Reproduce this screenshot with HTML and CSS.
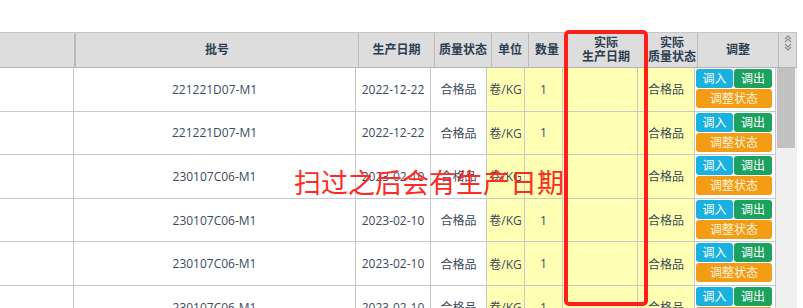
FILE: index.html
```html
<!DOCTYPE html>
<html lang="zh">
<head>
  <meta charset="UTF-8" />
  <title>库存调整</title>
  <link rel="stylesheet" href="styles.css">
</head>
<body>
  <div class="page">
    <div class="grid-head">
      <div class="th"></div>
      <div class="th">批号</div>
      <div class="th">生产日期</div>
      <div class="th">质量状态</div>
      <div class="th">单位</div>
      <div class="th">数量</div>
      <div class="th two-line">实际<br>生产日期</div>
      <div class="th two-line">实际<br>质量状态</div>
      <div class="th">调整</div>
      <div class="th sort-cell">
        <svg width="10" height="16" viewBox="0 0 10 16">
          <path d="M2 4 L5 1 L8 4 M2 7 L5 4 L8 7 M2 9 L5 12 L8 9 M2 12 L5 15 L8 12" fill="none" stroke="#8a8a8a" stroke-width="1.1" />
        </svg>
      </div>
    </div>

    <div class="grid-body">
      <div class="rows" id="rows"></div>
      <div class="scrollbar"><div class="thumb"></div></div>
    </div>

    <div class="mark-box"></div>
    <div class="mark-text">扫过之后会有生产日期</div>
  </div>

  <script>
    const data = [
      ["221221D07-M1", "2022-12-22"],
      ["221221D07-M1", "2022-12-22"],
      ["230107C06-M1", "2023-02-10"],
      ["230107C06-M1", "2023-02-10"],
      ["230107C06-M1", "2023-02-10"],
      ["230107C06-M1", "2023-02-10"]
    ];

    const rows = document.getElementById('rows');
    data.forEach(d => {
      const row = document.createElement('div');
      row.className = 'tr';
      row.innerHTML = `
        <div class="td"></div>
        <div class="td">${d[0]}</div>
        <div class="td">${d[1]}</div>
        <div class="td">合格品</div>
        <div class="td yellow">卷/KG</div>
        <div class="td yellow">1</div>
        <div class="td yellow"></div>
        <div class="td yellow">合格品</div>
        <div class="td ops">
          <span class="btn btn-in">调入</span>
          <span class="btn btn-out">调出</span>
          <span class="btn btn-state">调整状态</span>
        </div>
      `;
      rows.appendChild(row);
    });
  </script>
</body>
</html>
```

FILE: styles.css
```css
html, body {
  margin: 0;
  overflow: hidden;
  background: #fff;
}
body {
  font-family: "Open Sans", "Noto Sans CJK SC", sans-serif;
  font-size: 12px;
  color: #3b4b5b;
}
.page {
  position: relative;
  width: 797px;
  height: 308px;
  padding-top: 32px;
  box-sizing: border-box;
}

.grid-head {
  display: grid;
  grid-template-columns: 76px 283px 76px 57px 37px 37px 81px 51px 81px 18px;
  height: 36px;
  border-top: 1px solid #c4c4c4;
  border-bottom: 1px solid #b4b4b4;
  background-color: #dddddd;
  box-sizing: border-box;
}
.th {
  display: flex;
  align-items: center;
  justify-content: center;
  text-align: center;
  border-right: 1px solid #bcbcbc;
  font-weight: bold;
  color: #2d3e50;
  line-height: 14px;
}
.th:first-child {
  border-right-width: 2px;
}
.sort-cell {
  align-items: flex-start;
  padding-top: 2px;
}

.grid-body {
  display: flex;
}
.rows {
  width: 776px;
}
.tr {
  display: grid;
  grid-template-columns: 74px 282px 75px 56px 38px 38px 75px 57px 81px;
  height: 43.6px;
  border-bottom: 1px solid #c9c9c9;
  box-sizing: border-box;
}
.td {
  display: flex;
  align-items: center;
  justify-content: center;
  border-right: 1px solid #c9c9c9;
  white-space: nowrap;
}
.yellow {
  background-color: #ffffb3;
}

.ops {
  display: grid;
  grid-template-columns: 37px 38px;
  grid-template-rows: 19px 19px;
  gap: 1px;
  align-content: start;
  justify-content: start;
  padding: 1px 0 0 1px;
}
.btn {
  display: flex;
  align-items: center;
  justify-content: center;
  color: #fff;
  border-radius: 3px;
  line-height: 19px;
}
.btn-in {
  background-color: #19b1df;
}
.btn-out {
  background-color: #1ca25f;
}
.btn-state {
  grid-column: 1 / 3;
  background-color: #f39c16;
  color: #fff3df;
}

.scrollbar {
  width: 21px;
  background-color: #f0f0f0;
  padding-left: 1px;
  box-sizing: border-box;
}
.thumb {
  width: 18px;
  height: 80px;
  background-color: #c1c1c1;
}

.mark-box {
  position: absolute;
  left: 564px;
  top: 30px;
  width: 84px;
  height: 276px;
  border: 4px solid #ff1f1a;
  border-radius: 5px;
  box-sizing: border-box;
}
.mark-text {
  position: absolute;
  left: 294px;
  top: 168px;
  font-family: "Noto Sans CJK SC", sans-serif;
  font-size: 27px;
  line-height: 1;
  color: #ff2a26;
  white-space: nowrap;
}
```
